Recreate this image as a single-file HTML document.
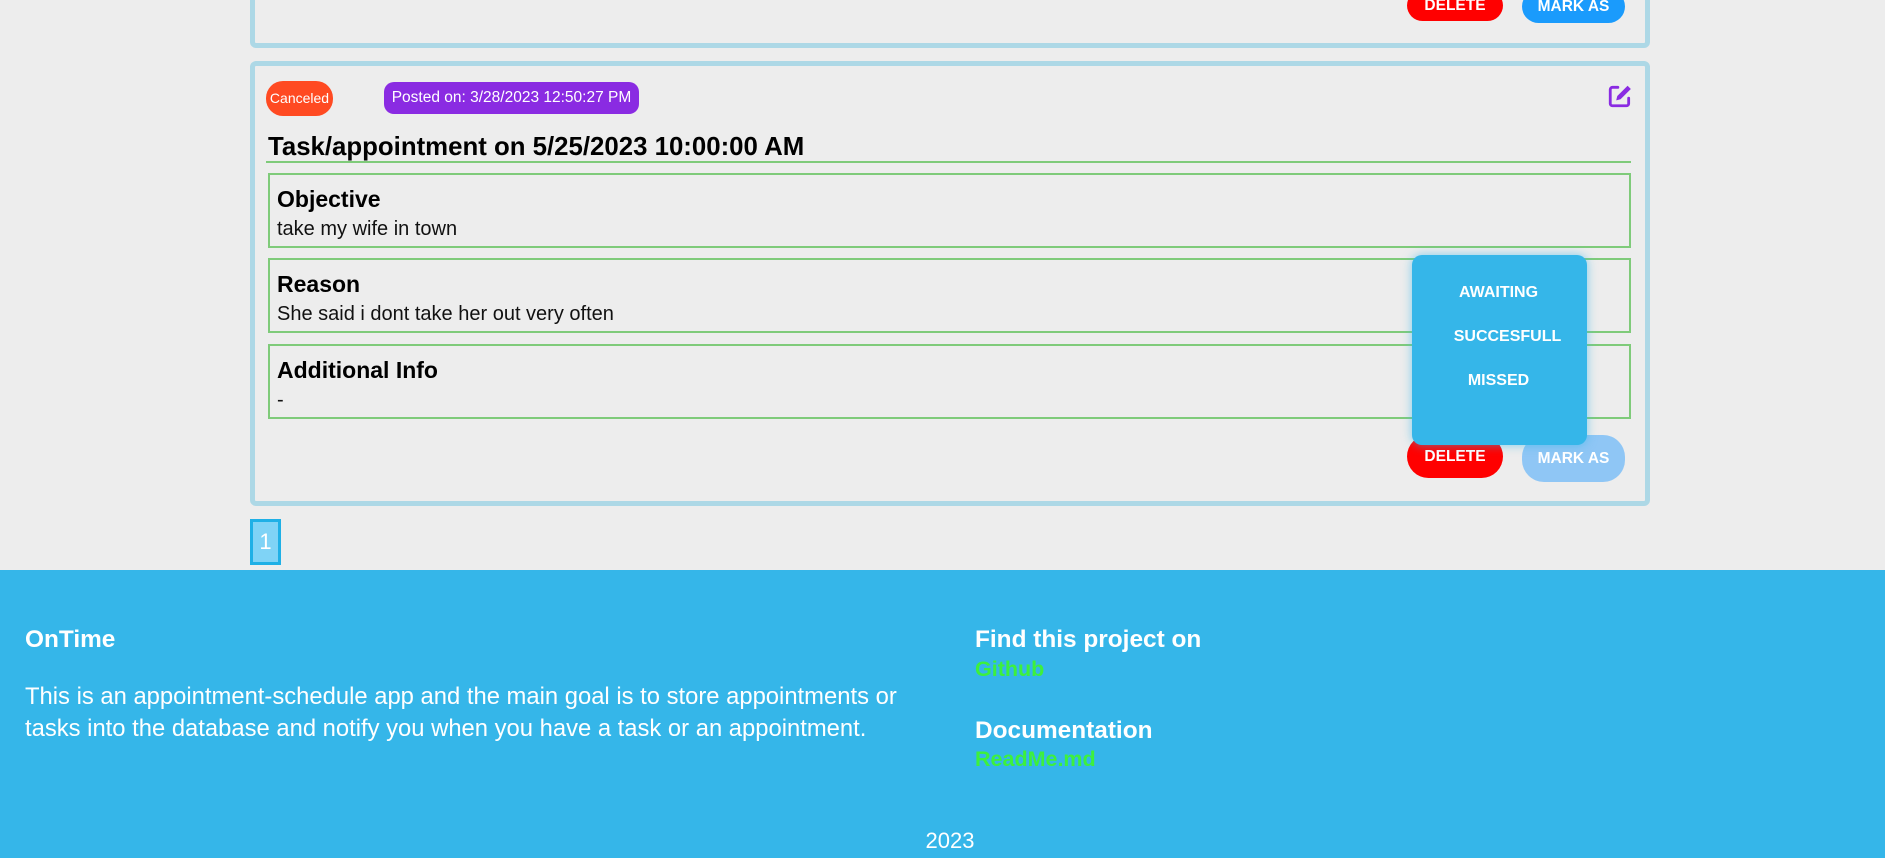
<!DOCTYPE html>
<html><head><meta charset="utf-8"><style>
*{margin:0;padding:0;box-sizing:border-box}
body{width:1885px;height:858px;overflow:hidden;background:#ededed;font-family:"Liberation Sans","DejaVu Sans",sans-serif;position:relative}
.a{position:absolute}
.card{position:absolute;border:5px solid #add8e6;border-radius:6px;background:#ededed}
.box{position:absolute;left:268px;width:1363px;border:2px solid #7fcb7a}
.box h3{position:absolute;left:7px;font-size:23px;font-weight:bold;color:#000}
.box p{position:absolute;left:7px;font-size:20px;color:#111}
.btn{position:absolute;border-radius:22px;color:#fff;font-weight:bold;font-size:15.5px;display:flex;align-items:center;justify-content:center}
.t{white-space:nowrap}
</style></head><body>
<div class="card" style="left:250px;top:-20px;width:1400px;height:68px"></div>
<div class="btn" style="left:1407px;top:-10px;width:96px;height:31px;background:#f00">DELETE</div>
<div class="btn" style="left:1522px;top:-10px;width:103px;height:33px;background:#1a9bfc">MARK AS</div>

<div class="card" style="left:250px;top:61px;width:1400px;height:445px"></div>
<div class="a t" style="left:266px;top:81px;width:67px;height:35px;border-radius:17px;background:#ff4a22;color:#fff;font-size:14px;line-height:35px;text-align:center">Canceled</div>
<div class="a t" style="left:384px;top:82px;width:255px;height:32px;border-radius:10px;background:#8a2be2;color:#fff;font-size:15.5px;line-height:32px;text-align:center">Posted on: 3/28/2023 12:50:27 PM</div>
<svg class="a" style="left:1607px;top:83px" width="26" height="26" viewBox="0 0 24 24"><path d="M10 4H5a2 2 0 0 0-2 2v13a2 2 0 0 0 2 2h13a2 2 0 0 0 2-2v-5" fill="none" stroke="#8a2be2" stroke-width="2.6" stroke-linecap="round"/><path d="M19 2.5l3 3-9.5 9.5-4 1 1-4z" fill="#8a2be2"/></svg>
<div class="a t" style="left:268px;top:133px;font-size:25.8px;font-weight:bold;color:#000">Task/appointment on 5/25/2023 10:00:00 AM</div>
<div class="a" style="left:266px;top:161px;width:1365px;height:2px;background:#7fcb7a"></div>
<div class="box" style="top:173px;height:75px"><h3 style="top:11px">Objective</h3><p style="top:43px">take my wife in town</p></div>
<div class="box" style="top:258px;height:75px"><h3 style="top:11px">Reason</h3><p style="top:43px">She said i dont take her out very often</p></div>
<div class="box" style="top:344px;height:75px"><h3 style="top:11px">Additional Info</h3><p style="top:43px">-</p></div>
<div class="btn" style="left:1407px;top:435px;width:96px;height:43px;background:#f00">DELETE</div>
<div class="btn" style="left:1522px;top:435px;width:103px;height:47px;background:#8fc6f5">MARK AS</div>
<div class="a" style="left:1412px;top:255px;width:175px;height:190px;border-radius:10px;background:#35b6e9;box-shadow:0 0 10px rgba(53,182,233,.6)">
<div class="a t" style="left:7px;width:175px;top:29px;text-align:center;color:#fff;font-weight:bold;font-size:16px;padding-right:16px">AWAITING</div>
<div class="a t" style="left:7px;width:175px;top:73px;text-align:center;color:#fff;font-weight:bold;font-size:16px;padding-left:2px">SUCCESFULL</div>
<div class="a t" style="left:7px;width:175px;top:117px;text-align:center;color:#fff;font-weight:bold;font-size:16px;padding-right:16px">MISSED</div>
</div>

<div class="a" style="left:250px;top:519px;width:31px;height:46px;border:3px solid #1fb0e6;background:#7fd3f6;color:#fff;font-size:22px;text-align:center;line-height:40px">1</div>

<div class="a" style="left:0;top:570px;width:1885px;height:288px;background:#35b6e9;color:#fff">
<div class="a t" style="left:25px;top:56px;font-size:24.4px;font-weight:bold">OnTime</div>
<div class="a t" style="left:25px;top:111px;font-size:23.8px;line-height:32px">This is an appointment-schedule app and the main goal is to store appointments or<br>tasks into the database and notify you when you have a task or an appointment.</div>
<div class="a t" style="left:975px;top:56px;font-size:24.4px;font-weight:bold">Find this project on</div>
<div class="a t" style="left:975px;top:87px;font-size:21.5px;font-weight:bold;color:#3df03d">Github</div>
<div class="a t" style="left:975px;top:147px;font-size:24.4px;font-weight:bold">Documentation</div>
<div class="a t" style="left:975px;top:177px;font-size:21.5px;font-weight:bold;color:#3df03d">ReadMe.md</div>
<div class="a t" style="left:0;width:1900px;top:258px;text-align:center;font-size:22px">2023</div>
</div>
</body></html>
